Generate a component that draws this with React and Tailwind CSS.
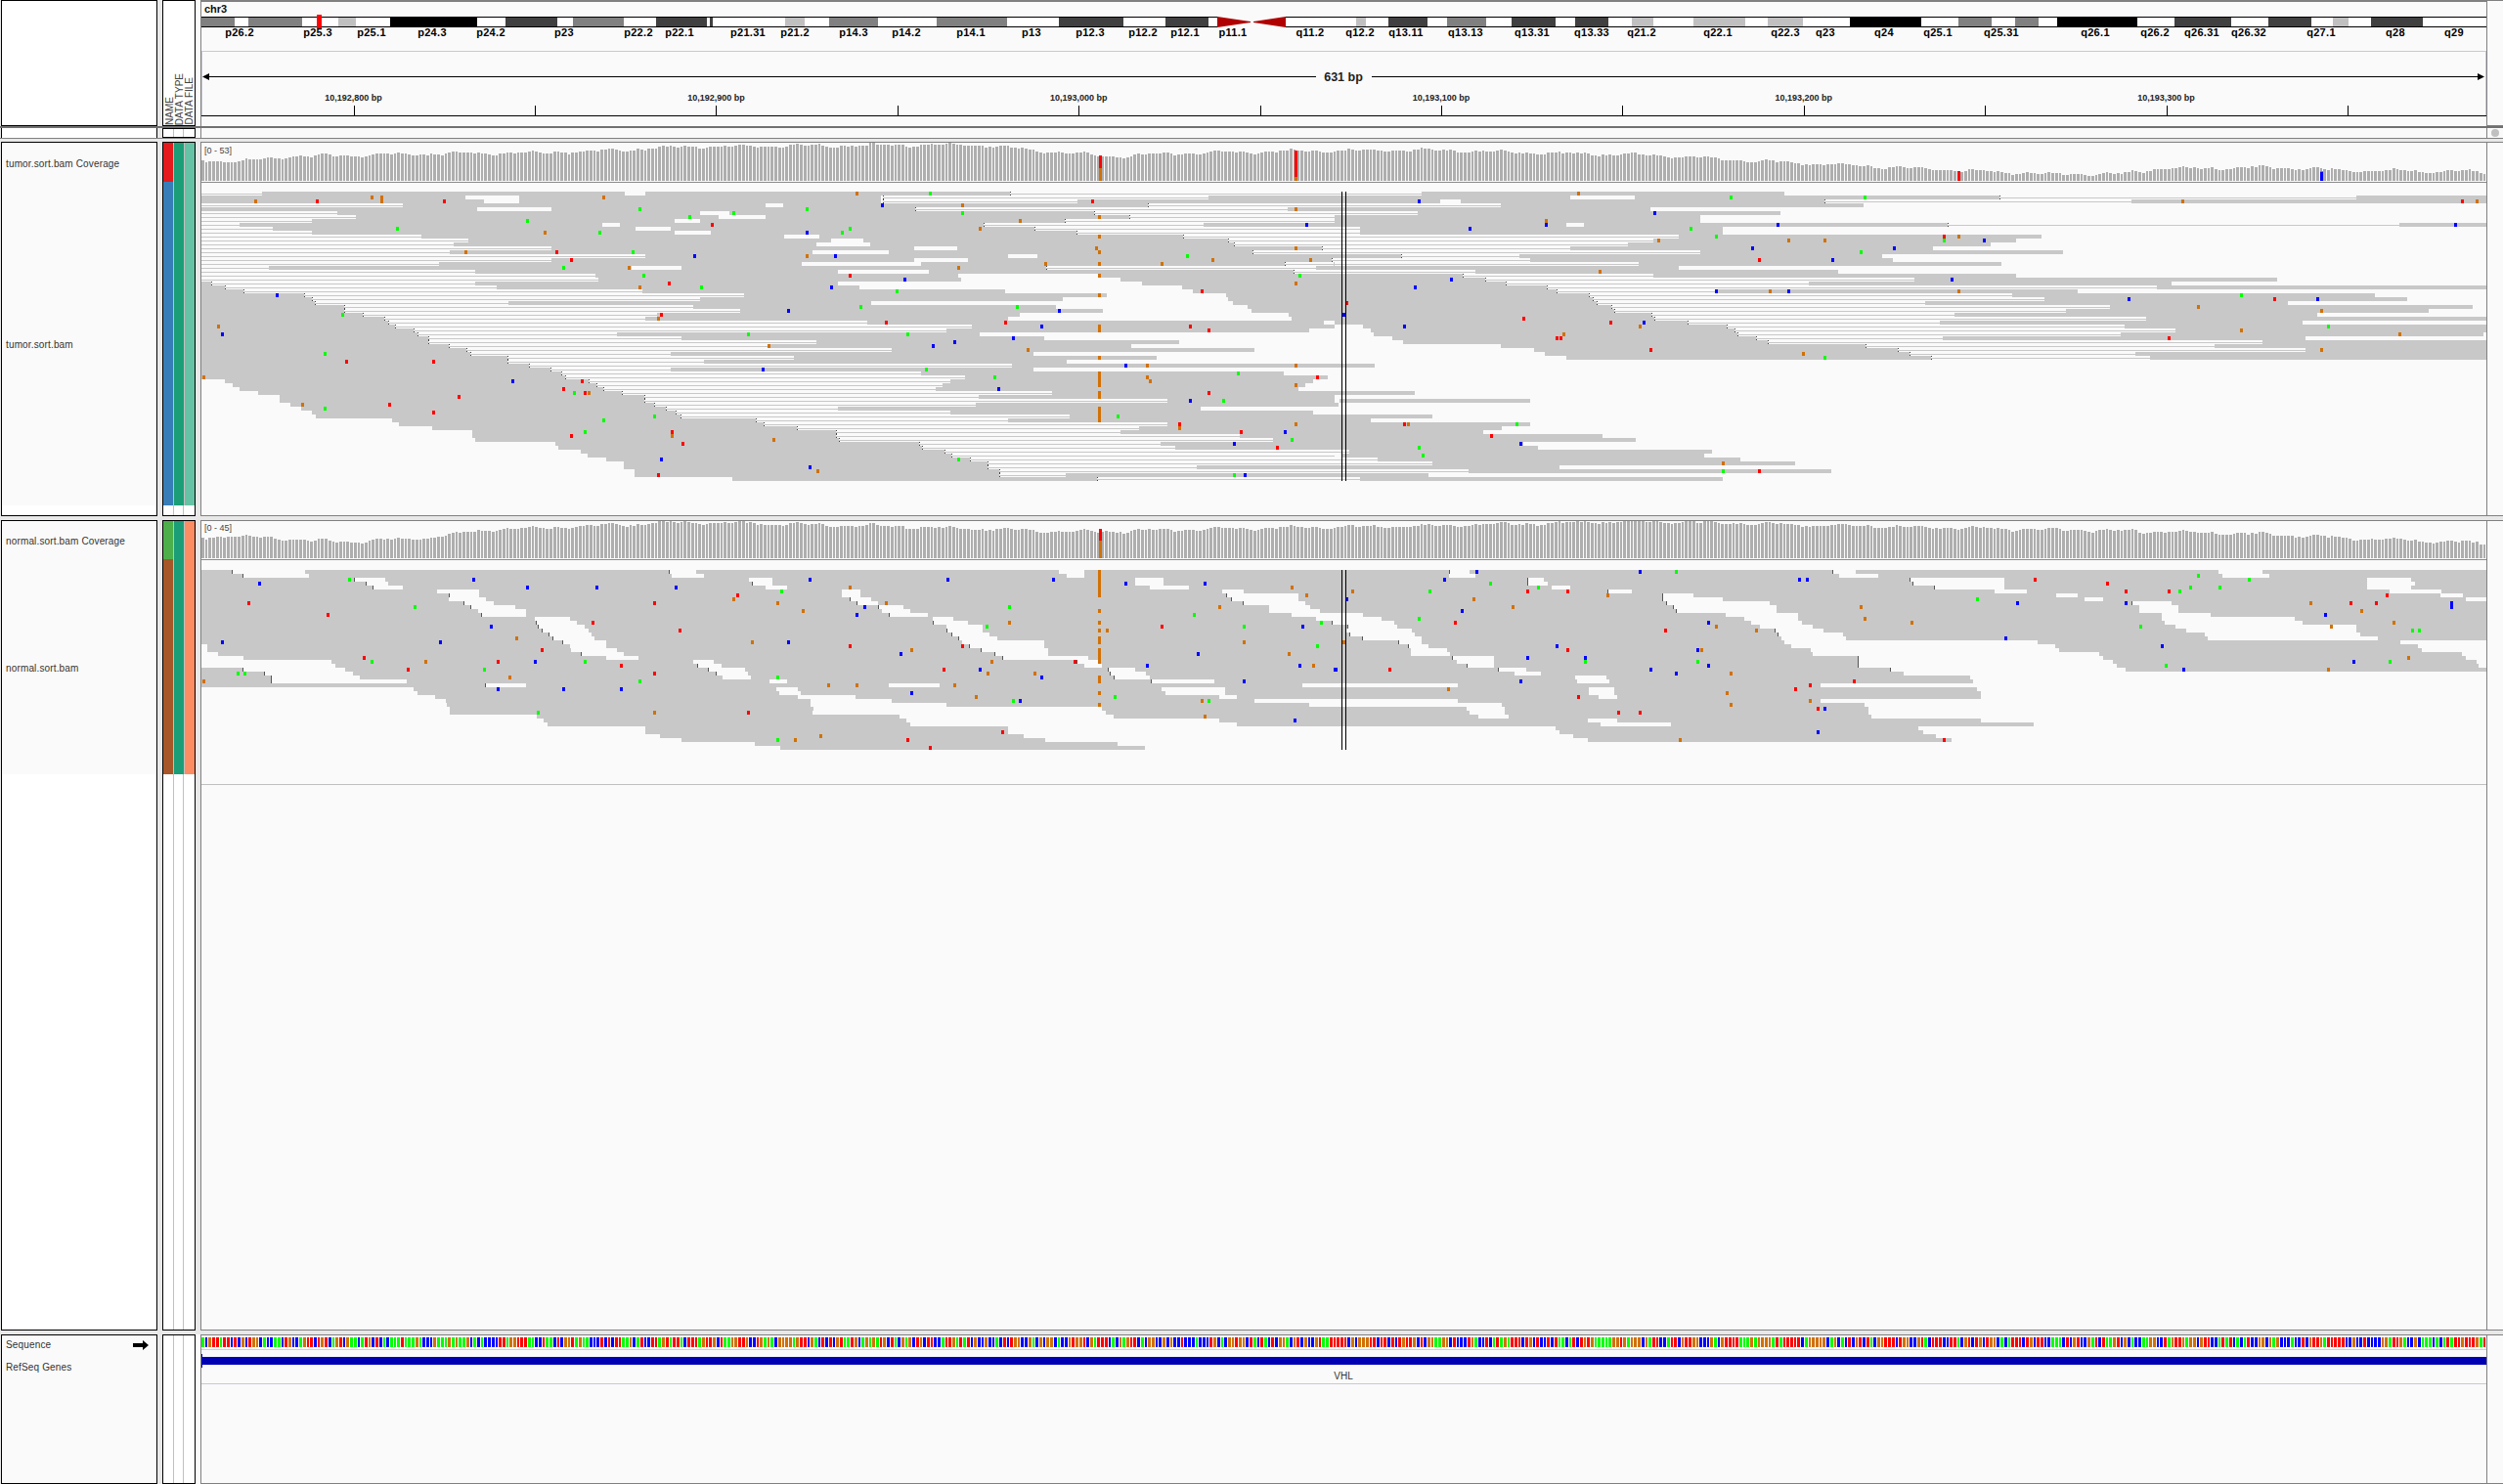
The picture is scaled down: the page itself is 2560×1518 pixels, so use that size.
import React from "react";

// bands: [start, end, colour]
const W = "#ffffff", G = "#808080", D = "#404040", K = "#000000", L = "#c0c0c0";
const bands = [
  [206, 240, G], [240, 254, W], [254, 309, G], [309, 346, W], [346, 364, L], [364, 399, W], [399, 488, K], [488, 517, W],
  [517, 570, D], [570, 586, W], [586, 638, G], [638, 671, W], [671, 723, D], [723, 726, W], [726, 729, D], [729, 803, W],
  [803, 823, L], [823, 848, W], [848, 898, G], [898, 958, W], [958, 1030, G], [1030, 1083, W], [1083, 1149, D], [1149, 1192, W],
  [1192, 1236, D], [1236, 1245, W], [1315, 1387, W], [1387, 1397, L], [1397, 1420, W], [1420, 1460, D], [1460, 1480, W],
  [1480, 1520, G], [1520, 1546, W], [1546, 1591, D], [1591, 1611, W], [1611, 1645, D], [1645, 1669, W], [1669, 1691, L],
  [1691, 1732, W], [1732, 1785, L], [1785, 1808, W], [1808, 1844, L], [1844, 1892, W], [1892, 1965, K], [1965, 2003, W],
  [2003, 2037, G], [2037, 2061, W], [2061, 2085, G], [2085, 2104, W], [2104, 2186, K], [2186, 2224, W], [2224, 2282, D],
  [2282, 2320, W], [2320, 2364, D], [2364, 2386, W], [2386, 2402, L], [2402, 2425, W], [2425, 2478, D], [2478, 2543, W],
];

const bandLabels = [
  ["p26.2", 245], ["p25.3", 325], ["p25.1", 380], ["p24.3", 442], ["p24.2", 502], ["p23", 577], ["p22.2", 653], ["p22.1", 695],
  ["p21.31", 765], ["p21.2", 813], ["p14.3", 873], ["p14.2", 927], ["p14.1", 993], ["p13", 1055], ["p12.3", 1115], ["p12.2", 1169],
  ["p12.1", 1212], ["p11.1", 1261], ["q11.2", 1340], ["q12.2", 1391], ["q13.11", 1438], ["q13.13", 1499], ["q13.31", 1567],
  ["q13.33", 1628], ["q21.2", 1679], ["q22.1", 1757], ["q22.3", 1826], ["q23", 1867], ["q24", 1927], ["q25.1", 1982],
  ["q25.31", 2047], ["q26.1", 2143], ["q26.2", 2204], ["q26.31", 2252], ["q26.32", 2300], ["q27.1", 2374], ["q28", 2450], ["q29", 2510],
];

const tickLabels = ["10,192,800 bp", "10,192,900 bp", "10,193,000 bp", "10,193,100 bp", "10,193,200 bp", "10,193,300 bp"];

const tumorCov = [[206, 164], [240, 165], [300, 160], [400, 158], [500, 157], [600, 155], [700, 150], [1000, 148], [1060, 154], [1135, 160], [1200, 157], [1300, 155], [1450, 153], [1600, 157], [1700, 159], [1800, 165], [2000, 174], [2100, 178], [2170, 178], [2200, 173], [2310, 171], [2400, 174], [2543, 176]];
const normalCov = [[206, 550], [240, 548], [300, 552], [350, 554], [430, 551], [500, 542], [600, 538], [700, 534], [900, 538], [1100, 544], [1300, 540], [1500, 537], [1680, 533], [1850, 537], [2120, 542], [2300, 546], [2543, 556]];

// reads of the tumor pileup, x in crop units: plain = read, ~ = pair line, letter = mismatch
const tumorLeft = [
  "~0-84 84-577 605-1100 ~1100-1568 o892 g992",
  "0-360 433-925 ~928-1370 1370-1568 o233 o247 o548",
  "0-385 433-925 ~928-1192 1192-1568 o75 r159 r332 o247 r1213",
  "~0-275 275-768 792-1287 ~1287-1568 b927 o1036",
  "0-376 477-972 ~972-1478 1478-1568 g597 g825 o1489",
  "~0-186 186-679 719-1214 ~1214-1568 g725 g1036",
  "~0-211 211-704 768-1263 ~1263-1545 1545-1568 g665 o1222",
  "~0-151 151-644 679-1175 ~1175-1545 1545-1568 g444 o1114",
  "~0-53 53-546 570-1065 ~1065-1363 1363-1568 r696 b1503",
  "~0-98 98-591 639-1134 ~1134-1568 g268 g883 o1060",
  "~0-151 151-644 694-1190 ~1190-1568 o469 g543 b825 g873",
  "~0-300 300-793 841-1336 ~1336-1568 o1222",
  "~0-364 364-857 901-1396 ~1396-1568",
  "~0-344 344-837 910-1405 ~1405-1568",
  "~0-477 477-970 1029-1524 ~1524-1568 o1218 o1489",
  "~0-339 339-832 935-1430 ~1430-1568 o361 r484 g588 o1222",
  "~0-605 605-1098 1137-1568 b672 o825 b863 g1341",
  "~0-477 477-970 1043-1538 ~1538-1568 r504 o1376 o1509",
  "~0-324 324-817 979-1474 ~1474-1540 1540-1568 o1149 o1222 o1307",
  "~0-93 93-586 654-1149 ~1149-1516 1516-1568 g494 o583 o1030",
  "~0-373 373-866 990-1485 ~1485-1568",
  "~0-537 537-1030 1222-1568 g603 r883 o1222 g1494",
  "~0-541 541-1034 1250-1568 b957",
  "0-14 ~14-373 373-866 1280-1568 r637 o1489",
  "0-33 ~33-403 403-896 1334-1568 o597 g681 b858",
  "0-58 ~58-601 601-1094 1349-1568 g947 r1361",
  "0-141 ~141-739 739-1232 1394-1568 b104 o1222",
  "0-151 ~151-679 679-1172 1396-1568",
  "0-156 ~156-419 419-912 1403-1568",
  "0-195 ~195-670 670-1163 1423-1568 g898 g1110",
  "0-195 ~195-734 734-1226 1428-1568 b799 b1168",
  "0-220 ~220-621 621-1114 1479-1568 g193 r627",
  "0-250 ~250-605 605-1098 1483-1568 o623",
  "0-255 ~255-906 906-1527 r932 r1094",
  "0-265 ~265-1048 1048-1541 o25 b1143 o1222 r1345",
  "0-290 ~290-1014 1014-1507 o1222 r1371",
  "0-295 ~295-566 566-1059 b30 g745 g961",
  "0-309 ~309-654 654-1147 b1105",
  "0-309 ~309-837 837-1330 b1025",
  "0-338 ~338-772 772-1265 o773 b996",
  "0-362 ~362-939 939-1432 o1125",
  "0-367 ~367-639 639-1132 g169",
  "0-417 ~417-807 807-1300 o1222",
  "0-417 ~417-684 684-1177 r199 r317",
  "0-446 ~446-1103 1103-1568 b1258 o1287 o1489",
  "0-476 ~476-639 639-1132 b765 g987",
  "0-490 ~490-979 979-1472 o1222 g1411",
  "0-495 ~495-1039 1039-1532 o5 g1080 o1222 o1287 r1518",
  "33-528 ~528-1019 1019-1512 b425 r519 o1222 o1291",
  "44-538 ~538-1009 1009-1502 o1222 o1489",
  "53-548 ~548-999 999-1492 r494 b1085",
  "78-573 ~573-1157 1157-1568 g508 r523 o528 o1222 r1371",
  "108-603 ~603-1058 1058-1551 r351 o1222",
  "108-603 ~603-1314 1314-1568 b1345 g1391",
  "122-617 ~617-1054 1054-1547 o139 r257",
  "137-632 ~632-866 866-1359 g169 o1222",
  "152-646 ~646-1019 1019-1512 r317 o1222",
  "157-652 ~652-1181 1181-1568 g617 o1222 g1247",
  "260-755 ~755-1098 1098-1568 g548 o1222",
  "270-765 ~765-1314 1314-1568 r1331 o1489",
  "315-810 ~810-1276 1276-1568 o1331",
  "369-864 ~864-1250 1250-1568 g523 r641 r1415 b1474",
  "369-864 ~864-1413 1413-1568 r504 o641",
  "373-868 ~868-1458 1458-1568 o779 g1484",
  "482-977 ~977-1305 1305-1568 r656 b1405",
  "487-981 ~981-1325 1325-1568 r1464",
  "517-1011 ~1011-1561 1561-1568",
  "526-1021 ~1021-1568",
  "551-1046 ~1046-1568 b627 g1031",
  "575-1070 ~1070-1568",
  "575-1070 ~1070-1354 1354-1568 b829",
  "590-1085 ~1085-1568 o839",
  "590-1085 ~1085-1176 1176-1568 r623 g1405 b1420",
  "723-1218 ~1218-1568",
];

const tumorRight = [
  "~0-118 118-611 o332",
  "0-320 408-903 ~903-1389 1389-1568 g539 g721",
  "0-144 171-666 ~666-1083 1083-1568 b115 o1153 r1533 o1553",
  "~0-226 226-719",
  "0-429",
  "~0-113 113-606 b435",
  "0-497",
  "0-497 o288",
  "0-315 339-833 ~833-1447 1447-1568 b288 b603 b1523",
  "~0-35 35-528 b184 g484",
  "~0-35 35-528",
  "~0-468 468-961 g519 r829 o848",
  "~0-433 433-926 o440 o617 o666 g829 b883",
  "~0-399 399-892",
  "~0-320 320-813 b568 b761",
  "~0-497 497-990 g716",
  "0-91 ~91-251 251-744",
  "~0-266 266-759 r577 b677",
  "~0-413 413-906",
  "0-468",
  "~0-191 191-684 o361",
  "0-174 ~174-433 433-926",
  "0-204 ~204-788 788-1281 b159 b839",
  "0-233 ~233-644 644-1137",
  "0-288 ~288-1118 1118-1568 b110",
  "0-302 ~302-519 519-1010 b519 o592 b617 o848",
  "0-346 ~346-921 921-1414 g1232",
  "0-351 ~351-965 965-1458 b1080 r1278 b1336",
  "0-356 ~356-803 803-1296 r17",
  "0-376 ~376-1054 1054-1547 o1174",
  "0-380 ~380-994 994-1487 o1341",
  "0-430 ~430-842 842-1335 b12",
  "0-435 ~435-1103 1103-1568 r257",
  "0-480 ~480-823 823-1316 r375 b421",
  "39-533 ~533-1074 1074-1568 b95 o415 g1351",
  "49-543 ~543-1143 1143-1568 o1232",
  "53-548 ~548-1068 1068-1561 o312 o1448",
  "78-573 ~573-827 827-1320 r302 r307 r1134",
  "93-588 ~588-1261 1261-1568",
  "226-721 ~721-1196 1196-1568",
  "271-766 ~766-1320 1320-1568 r430 o1341",
  "286-781 ~781-1088 1088-1568 o637",
  "315-810 ~810-1108 1108-1568 g666",
  "",
  "0-54",
  "", "", "", "", "", "",
  "0-109",
  "",
  "6-266",
  "0-5",
  "", "",
  "0-133",
  "0-49",
  "0-266 r95 o100 g248",
  "0-227",
  "0-202",
  "0-364 r213",
  "0-409",
  "0-257 b253",
  "0-276 g115",
  "~0-20 20-513",
  "10-502 g120",
  "~0-58 58-551",
  "~0-133 133-626 o528",
  "0-306",
  "~0-182 182-675 g528 r577",
  "0-128",
  "~0-35 35-528",
];

// normal pileup: F = full row, _ = hole, ! = hole with a clip mark at its start
const normalLeft = [
  "F !42-142 !637-674 _1167-1201 o1222",
  "F !57-147 _640-684 _1177-1201 o1222",
  "F !208-251 _745-777 _1270-1309 g203 b371 b829 b1016 b1159 o1222",
  "F !224-255 !749-777 _1270-1309 b80 b1258 b1365 o1222",
  "F !234-275 _768-797 _1290-1343 b444 b539 b646 o883 o1484 o1222",
  "F _322-379 _872-897 _1389-1418 g790 o1222",
  "F !337-379 _872-897 !1394-1492 r730 o1503 o1222",
  "F _338-388 !882-911 !1401-1492 o725",
  "F !358-399 !892-921 !1416-1502 r66 r617 o785 o932",
  "F !367-428 !921-955 _1453-1508 g292 b903 g1100 o1385",
  "F _378-442 _926-965 _1453-1522 o819 o1222",
  "F !381-442 !936-989 _1483-1568 r173 b892 g1351",
  "F _454-502 _995-1023 _1516-1568",
  "F !456-512 !995-1043 !1538-1568 r534 o1100 o1222 g1523",
  "F !459-522 _1014-1063 b395 g1069 r1307 g1419 b1498",
  "F !464-527 !1014-1063 r652 o1222 o1232",
  "F !473-531 !1020-1073",
  "F !478-536 !1030-1083 o430 o1222",
  "F !492-551 _1035-1147 b30 b326 o750 b799 o1222 o1419",
  "F _0-9 _502-551 !1045-1147 r883 r1036 g1518",
  "F _0-9 _503-566 !1060-1152 r464 o967 o1222",
  "F _0-24 !517-575 !1079-1152 b952 b1356 o1480 o1222",
  "F _0-58 _551-595 !1090-1206 r223 o1222",
  "F _0-178 _670-698 !1191-1220 g233 o306 r405 b455 g523 o1076 r1189 o1222",
  "F _0-183 !675-708 _1201-1225 r572 b1287 b1494 o1513",
  "F !57-197 !690-740 !1233-1270 r282 g386 r1011 b1060 b1543",
  "F !87-207 !700-744 !1236-1285 g51 g60 r617 o1070 o1134",
  "F !96-217 _710-748 !1241-1290 o421 g785 b1143 o1222",
  "F !96-280 _773-797 !1291-1378 o5 g597 o1222 b1419",
  "F !387-442 _935-1005 _1498-1568 o854 o892 o1025",
  "290-782 812-1306 1393-1568 b405 b494 b572",
  "295-787 816-1311 1393-1568 b967 o1222",
  "319-812 890-1385 1409-1568 o1055 g1243",
  "334-829 939-1433 g1105 b1114 o1361 g1371",
  "335-829 1014-1507 o1222",
  "339-833 1225-1568",
  "339-832 1231-1568 g459 o617 r745",
  "457-950 1241-1568 o1365",
  "467-960 1385-1568 b1488",
  "472-965 1409-1568",
  "605-1098",
  "605-1098 r1090",
  "625-1119 o843",
  "654-1148 g785 o809 r961",
  "753-1246",
  "788-1283 r992",
];

const normalRight = [
  "F !155-183 !677-708 _1201-1261 b193 b415 g464",
  "F _155-191 _685-739 _1206-1270 g1174",
  "F !262-285 !781-910 _1403-1463 b149 b632 b642 r952 g1243",
  "F !262-290 !785-910 _1403-1468 g212 r1050",
  "F _295-320 !815-910 _1403-1463 g277 g1163 g1203",
  "F !371-404 _897-941 _1434-1504 o25 g130 r262 r317 r1076 r1134 g1149",
  "F !445-488 _981-1010 _1503-1533 o371 r1430",
  "F !445-527 _1019-1044 _1538-1568 b17 o189 g874",
  "F !450-591 !1083-1137 b928 b1076 o1327 r1381 r1416 b1518",
  "F !460-601 _1094-1147 o243 o716 b1518",
  "F !464-601 _1094-1147 b173 o1396",
  "F _0-39 _532-630 _1124-1191 b1347",
  "F _0-64 _557-630 _1124-1305 g115 o721",
  "F _0-81 _566-635 _1128-1315 r164 b508 o785 o1440",
  "F !17-85 _578-650 _1143-1389 o519 g1096 o1355",
  "F _15-105 !598-664 _1158-1389 r450 o573 g1465 g1474",
  "F !20-109 !602-691 _1183-1394",
  "F !37-118 _607-695 _1187-1418 b912",
  "F !86-118 _611-955 _1448-1568 o12",
  "F !100-128 _621-979 _1472-1568 b302 b1125",
  "F _104-153 _647-984 _1477-1568 r317 b494 o499",
  "F _104-157 _650-1039 _1532-1568",
  "F !160-217 !711-1044 _1537-1568 b262 b341 o1460",
  "F _166-217 !711-1058 _1552-1568 g341 g494 b1385 g1434",
  "F !179-217 !711-1063 _1555-1568 b508 g1130",
  "F !222-261 !755-1075 b2 r75 b430 b1154 o1351",
  "0-244 280-773 b464 o539",
  "0-327 369-864",
  "0-329 373-868 b253 r706",
  "167-660 r646",
  "0-346 380-873 o155 r627",
  "0-345 380-878 o534",
  "0-359 384-879 r332",
  "167-661 o646",
  "227-720 o539",
  "0-179 231-725 r657 b666",
  "0-184 231-725 r386 r415",
  "0-195 237-730",
  "0-344 384-879",
  "0-362 457-950",
  "300-793",
  "305-800 b657",
  "324-817",
  "344-839 o470 r829",
];

const baseColor = { r: "#ff0000", g: "#00ff00", b: "#0000ff", o: "#d17105" };
const STEP = 3.71;
const basesCount = Math.floor(2337 / STEP);

const noise = (i) => {
  const n = Math.sin(i * 12.9898) * 43758.5453;
  return n - Math.floor(n);
};

const profile = (pts, x) => {
  for (let i = 1; i < pts.length; i++) {
    if (x <= pts[i][0]) {
      const [a, ya] = pts[i - 1];
      const [b, yb] = pts[i];
      return ya + ((yb - ya) * (x - a)) / (b - a);
    }
  }
  return pts[pts.length - 1][1];
};

// one bar per base, always leaving a 1px gap before the next one
const baseX = (i) => Math.round(206 + i * STEP);
const baseW = (i) => baseX(i + 1) - baseX(i) - 1;

function Coverage({ pts, base, label, labelY, marks }) {
  const bars = [];
  for (let i = 0; i < basesCount + 1; i++) {
    const x = baseX(i);
    const wobble = Math.sin(i * 0.33) * 1.2 + Math.sin(i * 0.87 + 1) * 0.8 + (noise(i) - 0.5) * 1.6;
    const top = Math.round(profile(pts, x) + wobble);
    bars.push(<rect key={i} x={x} y={top} width={baseW(i)} height={base - top} fill="#aeaeae" />);
  }
  return (
    <g shapeRendering="crispEdges">
      {bars}
      {marks.map(([x, y0, y1, c]) => (
        <rect key={x + "-" + y0} x={x} y={y0} width={3} height={y1 - y0} fill={c} />
      ))}
      <rect x={206} y={base + 1} width={2337} height={1} fill="#8c8c8c" />
      <text x={209} y={labelY} fontSize={9} fill="#444">{label}</text>
    </g>
  );
}

function Pileup({ rows, x0, limit, top }) {
  const X = (u) => x0 + Math.min(u, limit) / 1.3288;
  const out = [];
  rows.forEach((row, r) => {
    const y = top + r * 4;
    const tokens = row.split(" ").filter(Boolean);
    if (tokens[0] === "F") {
      out.push(<rect key={r + "F"} x={X(0)} y={y} width={X(limit) - X(0)} height={4} fill="#c8c8c8" />);
    }
    tokens.forEach((tok, t) => {
      const m = tok.match(/^([~_!]?)(\d+)-(\d+)$/);
      const key = r + "-" + t;
      if (m) {
        const a = X(+m[2]);
        const b = X(+m[3]);
        if (b <= a) return;
        if (m[1] === "~") {
          out.push(<rect key={key} x={a} y={y + 2} width={b - a} height={1} fill="#c8c8c8" />);
          if (+m[2] > 0) {
            out.push(<rect key={key + "t"} x={a} y={y} width={1} height={1} fill="#444" />);
            out.push(<rect key={key + "u"} x={a} y={y + 3} width={1} height={1} fill="#444" />);
          }
        } else if (m[1] === "_" || m[1] === "!") {
          out.push(<rect key={key} x={a} y={y} width={b - a} height={4} fill="#fafafa" />);
          if (m[1] === "!" && +m[2] > 0) out.push(<rect key={key + "t"} x={a} y={y} width={1} height={4} fill="#555" />);
        } else {
          out.push(<rect key={key} x={a} y={y} width={b - a} height={4} fill="#c8c8c8" />);
        }
      }
    });
    tokens.forEach((tok, t) => {
      const m = tok.match(/^([rgbo])(\d+)$/);
      if (m && +m[2] < limit + 20) {
        out.push(<rect key={r + "m" + t} x={X(+m[2]) - 1.5} y={y} width={3} height={4} fill={baseColor[m[1]]} />);
      }
    });
  });
  return <g shapeRendering="crispEdges">{out}</g>;
}

function NamePanel({ cov, bam, split, fillEnd }) {
  return (
    <div className="ml-px w-[160px] border border-black bg-white flex flex-col text-[10px] tracking-[0.15px] text-[#333]">
      <div className={`${split} bg-[#fafafa] flex items-center px-[4px] pt-[2px]`}>{cov}</div>
      <div className={`${fillEnd} bg-[#fafafa] flex items-center px-[4px] pt-[2px]`}>{bam}</div>
    </div>
  );
}

function AttrPanel({ first, second, third, split, fillEnd }) {
  return (
    <div className="ml-[5px] w-[34px] border border-black bg-white flex flex-col">
      <div className={`${fillEnd} flex`}>
        <div className="flex-1 flex flex-col border-r border-[#c0c0c0]">
          <div className={`${split} ${first[0]}`} />
          <div className={`flex-1 ${first[1]}`} />
        </div>
        <div className={`flex-1 border-r border-[#c0c0c0] ${second}`} />
        <div className={`flex-1 ${third}`} />
      </div>
      <div className="flex-1 grid grid-cols-3">
        <div className="border-r border-[#c0c0c0]" />
        <div className="border-r border-[#c0c0c0]" />
        <div />
      </div>
    </div>
  );
}

const EmptyAttr = ({ children }) => (
  <div className="ml-[5px] w-[34px] border border-black bg-white grid grid-cols-3">
    {children || (
      <>
        <div className="border-r border-[#c0c0c0]" />
        <div className="border-r border-[#c0c0c0]" />
        <div />
      </>
    )}
  </div>
);

const Scroll = ({ children }) => (
  <div className="w-[16px] border-y border-[#808080] bg-[#fafafa] flex justify-center items-center">{children}</div>
);

export default function App() {
  const ticks = [];
  for (let k = 0; k < 12; k++) ticks.push(361.6 + k * 185.4);

  return (
    <div className="w-[2560px] h-[1518px] flex flex-col bg-[#e8e8e8] font-['Liberation_Sans',Arial,sans-serif] overflow-hidden">
      {/* Header */}
      <div className="flex h-[129px] shrink-0">
        <div className="ml-px w-[160px] border border-black bg-white" />
        <EmptyAttr>
          <div className="col-span-3 flex items-end justify-between pl-[2px] text-[10px] leading-[10px] text-[#444]">
            <span className="[writing-mode:vertical-rl] rotate-180 w-[10px]">NAME</span>
            <span className="[writing-mode:vertical-rl] rotate-180 w-[10px]">DATA TYPE</span>
            <span className="[writing-mode:vertical-rl] rotate-180 w-[10px]">DATA FILE</span>
          </div>
        </EmptyAttr>
        <div className="w-[5px] bg-[#fafafa]" />
        <div className="w-[2339px] border-x border-t-2 border-[#808080] bg-[#fafafa]">
          <svg width="2337" height="127" viewBox="206 2 2337 127" className="block">
            <text x={209} y={13} fontSize={11} fontWeight="bold" fill="#111">chr3</text>
            <g shapeRendering="crispEdges">
              {bands.map(([a, b, c]) => (
                <rect key={a} x={a} y={17} width={b - a} height={11} fill={c} />
              ))}
              <rect x={206} y={17} width={1039} height={1} fill="#000" />
              <rect x={206} y={27} width={1039} height={1} fill="#000" />
              <rect x={1315} y={17} width={1228} height={1} fill="#000" />
              <rect x={1315} y={27} width={1228} height={1} fill="#000" />
              <rect x={324} y={15} width={5} height={15} fill="#ff0000" />
            </g>
            <polygon points="1245,17 1245,28 1279,23 1279,22" fill="#b00000" />
            <polygon points="1315,17 1315,28 1282,23 1282,22" fill="#b00000" />
            {bandLabels.map(([t, x]) => (
              <text key={t} x={x} y={37} fontSize={11} fontWeight="bold" textAnchor="middle" letterSpacing="0.3" fill="#000">{t}</text>
            ))}
            <g shapeRendering="crispEdges">
              <rect x={206} y={52} width={2337} height={1} fill="#c8c8d8" />
              <rect x={206} y={52} width={1} height={66} fill="#c8c8d8" />
              <rect x={2542} y={52} width={1} height={66} fill="#c8c8d8" />
              <rect x={208} y={78} width={1138} height={1} fill="#000" />
              <rect x={1403} y={78} width={1137} height={1} fill="#000" />
              <rect x={206} y={118} width={2337} height={1} fill="#000" />
              {ticks.map((x) => (
                <rect key={x} x={Math.round(x)} y={108} width={1} height={10} fill="#000" />
              ))}
            </g>
            <polygon points="207,78.5 214,75 214,82" fill="#000" />
            <polygon points="2541,78.5 2534,75 2534,82" fill="#000" />
            <text x={1374} y={83} fontSize={12.5} fontWeight="bold" textAnchor="middle" fill="#222">631 bp</text>
            {tickLabels.map((t, i) => (
              <text key={t} x={361.6 + i * 370.8} y={103} fontSize={9} fontWeight="bold" textAnchor="middle" fill="#222">{t}</text>
            ))}
          </svg>
        </div>
        <Scroll />
      </div>
      <div className="h-[2px] shrink-0 bg-[#707070]" />

      {/* Empty strip */}
      <div className="flex h-[11px] shrink-0 border-b border-[#808080]">
        <div className="ml-px w-[160px] border-x border-black bg-white" />
        <EmptyAttr />
        <div className="w-[5px] bg-[#fafafa]" />
        <div className="w-[2339px] border-x border-[#808080] bg-[#fafafa]" />
        <div className="w-[16px] bg-[#fafafa] flex justify-center items-center">
          <div className="w-[8px] h-[8px] rounded-full bg-[#c0c0c0]" />
        </div>
      </div>
      <div className="h-[3px] shrink-0" />

      {/* Tumor */}
      <div className="flex h-[383px] shrink-0">
        <NamePanel cov="tumor.sort.bam Coverage" bam="tumor.sort.bam" split="h-[40px]" fillEnd="h-[331px]" />
        <AttrPanel first={["bg-[#e41a1c]", "bg-[#377eb8]"]} second="bg-[#1b9e77]" third="bg-[#66c2a5]" split="h-[40px]" fillEnd="h-[371px]" />
        <div className="w-[5px]" />
        <div className="w-[2339px] border border-[#808080] bg-[#fafafa]">
          <svg width="2337" height="381" viewBox="206 146 2337 381" className="block">
            <Coverage
              pts={tumorCov}
              base={185}
              label="[0 - 53]"
              labelY={157}
              marks={[
                [1124, 159, 172, "#ff0000"], [1124, 172, 185, "#d17105"],
                [1324, 154, 181, "#ff0000"], [1324, 181, 185, "#d17105"],
                [2002, 175, 185, "#ff0000"],
                [2373, 175, 176, "#d17105"], [2373, 176, 185, "#0000ff"],
              ]}
            />
            <Pileup rows={tumorLeft} x0={205} limit={1541.7} top={196} />
            <Pileup rows={tumorRight} x0={1365} limit={1568} top={196} />
            <g shapeRendering="crispEdges">
              <rect x={1372} y={196} width={1} height={296} fill="#000" />
              <rect x={1376} y={196} width={1} height={296} fill="#000" />
            </g>
          </svg>
        </div>
        <Scroll />
      </div>
      <div className="h-[4px] shrink-0" />

      {/* Normal */}
      <div className="flex h-[829px] shrink-0">
        <NamePanel cov="normal.sort.bam Coverage" bam="normal.sort.bam" split="h-[39px]" fillEnd="h-[220px]" />
        <AttrPanel first={["bg-[#4daf4a]", "bg-[#a65628]"]} second="bg-[#1b9e77]" third="bg-[#fc8d62]" split="h-[39px]" fillEnd="h-[259px]" />
        <div className="w-[5px]" />
        <div className="w-[2339px] border border-[#808080] bg-[#fafafa]">
          <svg width="2337" height="270" viewBox="206 533 2337 270" className="block">
            <Coverage
              pts={normalCov}
              base={571}
              label="[0 - 45]"
              labelY={543}
              marks={[[1124, 541, 553, "#ff0000"], [1124, 553, 571, "#d17105"]]}
            />
            <Pileup rows={normalLeft} x0={205} limit={1541.7} top={583} />
            <Pileup rows={normalRight} x0={1365} limit={1568} top={583} />
            <g shapeRendering="crispEdges">
              <rect x={1372} y={583} width={1} height={184} fill="#000" />
              <rect x={1376} y={583} width={1} height={184} fill="#000" />
              <rect x={206} y={802} width={2337} height={1} fill="#c0c0c0" />
            </g>
          </svg>
        </div>
        <Scroll />
      </div>
      <div className="h-[4px] shrink-0" />

      {/* Sequence + genes */}
      <div className="flex h-[153px] shrink-0">
        <div className="ml-px w-[160px] border border-black bg-[#fafafa] px-[4px] text-[10px] tracking-[0.15px] text-[#333] flex flex-col">
          <div className="h-[19px] flex items-center justify-between pr-[4px]">
            <span>Sequence</span>
            <svg width="16" height="10" viewBox="0 0 16 10">
              <path d="M0 3h10V0l6 5-6 5V7H0z" fill="#000" />
            </svg>
          </div>
          <div className="mt-[6px]">RefSeq Genes</div>
        </div>
        <EmptyAttr />
        <div className="w-[5px] bg-[#fafafa]" />
        <div className="w-[2339px] border border-[#808080] bg-[#fafafa]">
          <svg width="2337" height="60" viewBox="206 1366 2337 60" className="block">
            <g shapeRendering="crispEdges">
              {Array.from({ length: basesCount + 1 }, (_, i) => {
                const n = Math.floor(noise(i + 7) * 4);
                return (
                  <rect key={i} x={baseX(i)} y={1368} width={baseW(i)} height={10} fill={["#00ff00", "#0000ff", "#d17105", "#ff0000"][n]} />
                );
              })}
              <rect x={206} y={1380} width={2337} height={1} fill="#d0d0d8" />
              <rect x={206} y={1388} width={2337} height={8} fill="#0000b2" />
              <rect x={206} y={1385} width={1} height={14} fill="#0000b2" />
              <rect x={206} y={1415} width={2337} height={1} fill="#c8c8d8" />
            </g>
            <text x={1374} y={1411} fontSize={10} textAnchor="middle" fill="#333">VHL</text>
          </svg>
        </div>
        <Scroll />
      </div>
    </div>
  );
}
